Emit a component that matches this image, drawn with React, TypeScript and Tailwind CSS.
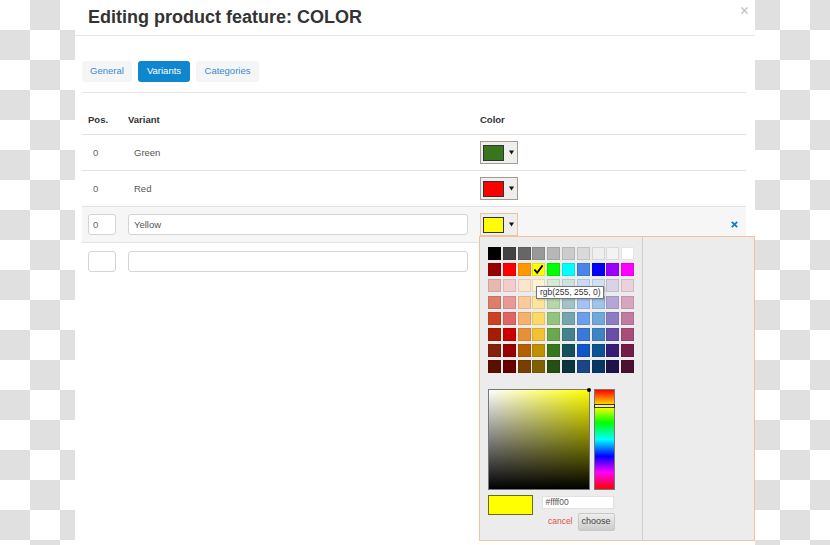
import React from "react";

const palette = [
  ["#000000", "#434343", "#666666", "#999999", "#b7b7b7", "#cccccc", "#d9d9d9", "#efefef", "#f3f3f3", "#ffffff"],
  ["#980000", "#ff0000", "#ff9900", "#ffff00", "#00ff00", "#00ffff", "#4a86e8", "#0000ff", "#9900ff", "#ff00ff"],
  ["#e6b8af", "#f4cccc", "#fce5cd", "#fff2cc", "#d9ead3", "#d0e0e3", "#c9daf8", "#cfe2f3", "#d9d2e9", "#ead1dc"],
  ["#dd7e6b", "#ea9999", "#f9cb9c", "#ffe599", "#b6d7a8", "#a2c4c9", "#a4c2f4", "#9fc5e8", "#b4a7d6", "#d5a6bd"],
  ["#cc4125", "#e06666", "#f6b26b", "#ffd966", "#93c47d", "#76a5af", "#6d9eeb", "#6fa8dc", "#8e7cc3", "#c27ba0"],
  ["#a61c00", "#cc0000", "#e69138", "#f1c232", "#6aa84f", "#45818e", "#3c78d8", "#3d85c6", "#674ea7", "#a64d79"],
  ["#85200c", "#990000", "#b45f06", "#bf9000", "#38761d", "#134f5c", "#1155cc", "#0b5394", "#351c75", "#741b47"],
  ["#5b0f00", "#660000", "#783f04", "#7f6000", "#274e13", "#0c343d", "#1c4587", "#073763", "#20124d", "#4c1130"],
];

const tabs = [
  { label: "General", width: "w-[50px]", active: false },
  { label: "Variants", width: "w-[52px]", active: true },
  { label: "Categories", width: "w-[63px]", active: false },
];

function ColorButton({ fill, active }: { fill: string; active?: boolean }) {
  return (
    <div
      className={`flex h-[23px] w-[38px] items-center border bg-[#eee] pl-[2px] ${
        active ? "border-[#f0c49b]" : "border-[#a89a8c]"
      }`}
    >
      <div className={`h-[16px] w-[21px] border border-[#333] ${fill}`} />
      <svg className="ml-[5px]" width="5" height="5" viewBox="0 0 5 5">
        <path d="M0 0.5h5L2.5 4.5z" fill="#111" />
      </svg>
    </div>
  );
}

function ColorPicker() {
  return (
    <div className="absolute left-[404px] top-[236px] flex h-[305px] w-[276px] border border-[#f0c49b] bg-[#ececec]">
      <div className="relative w-[163px] border-r border-[#cfcfcf] pl-[8px] pt-[10px]">
        <div className="grid grid-cols-[repeat(10,13px)] gap-x-[1.8px] gap-y-[3.2px]">
          {palette.flat().map((color, i) => (
            <div
              key={i}
              className="flex h-[13px] w-[13px] items-center justify-center border border-black/10"
              style={{ backgroundColor: color }}
            >
              {i === 13 && (
                <svg width="12" height="11" viewBox="0 0 12 11">
                  <path d="M1.5 5.5 L4.5 9 L10.5 1" fill="none" stroke="#000" strokeWidth="2" />
                </svg>
              )}
            </div>
          ))}
        </div>

        <div className="mt-[16px] flex gap-[4px]">
          <div className="relative h-[101px] w-[102px] border border-[#777] bg-[#ffff00]">
            <div className="absolute inset-0 bg-linear-to-r from-white to-transparent" />
            <div className="absolute inset-0 bg-linear-to-t from-black to-transparent" />
            <div className="absolute -right-[2px] -top-[2px] h-[4px] w-[4px] rounded-full bg-black" />
          </div>
          <div className="relative h-[101px] w-[21px] border border-[#777] bg-[linear-gradient(to_bottom,#f00_0%,#ff0_17%,#0f0_33%,#0ff_50%,#00f_67%,#f0f_83%,#f00_100%)]">
            <div className="absolute -left-[1px] -right-[1px] top-[14px] h-[4px] border border-[#333] bg-white/30" />
          </div>
        </div>

        <div className="mt-[5px] flex">
          <div className="h-[20px] w-[45px] border border-[#6b6b20] bg-[#ffff00]" />
          <div className="ml-[8.5px] flex w-[72px] flex-col">
            <div className="mt-[1px] h-[13px] border border-[#e2e2e2] bg-white pl-[3px] text-[8.5px] leading-[11px] text-[#555]">
              #ffff00
            </div>
            <div className="mt-[3.5px] flex items-center justify-end gap-[5px]">
              <span className="text-[8.5px] text-[#d9534f]">cancel</span>
              <button className="-mr-[1px] h-[18px] w-[37px] rounded-[2px] border border-[#c8c8c8] bg-linear-to-b from-[#eee] to-[#ccc] text-[9px] text-[#444]">
                choose
              </button>
            </div>
          </div>
        </div>

        <div className="absolute left-[56px] top-[49px] h-[13px] w-[68px] border border-[#767676] bg-white pl-[3px] text-[8.5px] leading-[11px] text-[#333] shadow-[1px_1px_2px_rgba(0,0,0,0.2)]">
          rgb(255, 255, 0)
        </div>
      </div>
      <div className="flex-1" />
    </div>
  );
}

export default function App() {
  return (
    <div className="h-[545px] w-[830px] overflow-hidden bg-[image:conic-gradient(#e0e0e0_25%,#fff_0_50%,#e0e0e0_0_75%,#fff_0)] bg-[length:60px_60px] pl-[75px] font-['Liberation_Sans',Arial,sans-serif]">
      <div className="relative h-[545px] w-[680px] bg-white">
        <div className="h-[36px] border-b border-[#e8e8e8] pl-[13px] pt-[6.5px] text-[18px] font-bold leading-[20px] text-[#333]">
          Editing product feature: COLOR
        </div>
        <button type="button" className="absolute right-[7px] top-[7px]">
          <svg width="7" height="7" viewBox="0 0 7 7">
            <path d="M0.5 0.5L6.5 6.5M6.5 0.5L0.5 6.5" stroke="#c4c4c4" strokeWidth="1.5" />
          </svg>
        </button>

        <div className="pl-[7px] pr-[9px]">
          <div className="flex gap-[6px] border-b border-[#e5e5e5] pb-[10px] pt-[25px]">
            {tabs.map((tab) => (
              <div
                key={tab.label}
                className={`flex h-[21px] items-center justify-center rounded-[3px] text-[9.5px] ${tab.width} ${
                  tab.active ? "bg-[#0e87cf] text-white" : "bg-[#f3f5f7] text-[#3d89cc]"
                }`}
              >
                {tab.label}
              </div>
            ))}
          </div>

          <div className="grid h-[42px] grid-cols-[40px_352px_1fr_30px] items-end border-b border-[#e3e3e3] pb-[8px] text-[9.5px] font-bold leading-[12px] text-[#333]">
            <div className="pl-[6px]">Pos.</div>
            <div className="pl-[6px]">Variant</div>
            <div className="pl-[6px]">Color</div>
            <div />
          </div>

          <div className="grid h-[36px] grid-cols-[40px_352px_1fr_30px] items-center border-b border-[#e3e3e3] text-[9.5px] leading-[12px]">
            <div className="pl-[11px] text-[#666]">0</div>
            <div className="pl-[12px] text-[#555]">Green</div>
            <div className="pl-[6px]">
              <ColorButton fill="bg-[#38761d]" />
            </div>
            <div />
          </div>

          <div className="grid h-[36px] grid-cols-[40px_352px_1fr_30px] items-center border-b border-[#e3e3e3] text-[9.5px] leading-[12px]">
            <div className="pl-[11px] text-[#666]">0</div>
            <div className="pl-[12px] text-[#555]">Red</div>
            <div className="pl-[6px]">
              <ColorButton fill="bg-[#ff0000]" />
            </div>
            <div />
          </div>

          <div className="grid h-[36px] grid-cols-[40px_352px_1fr_30px] items-center border-b border-[#e3e3e3] bg-[#f6f6f6] text-[9.5px] leading-[12px]">
            <div className="pl-[6px]">
              <div className="flex h-[21px] w-[28px] items-center rounded-[3px] border border-[#d4d4d4] bg-white pl-[4px] text-[#666]">
                0
              </div>
            </div>
            <div className="pl-[6px]">
              <div className="flex h-[21px] w-[340px] items-center rounded-[3px] border border-[#d4d4d4] bg-white pl-[5px] text-[#555]">
                Yellow
              </div>
            </div>
            <div className="pl-[6px]">
              <ColorButton fill="bg-[#ffff00]" active />
            </div>
            <div className="flex justify-end pr-[8px]">
              <svg width="7" height="7" viewBox="0 0 7 7">
                <path d="M0.8 0.8L6.2 6.2M6.2 0.8L0.8 6.2" stroke="#1a7bc2" strokeWidth="1.8" />
              </svg>
            </div>
          </div>

          <div className="grid h-[36px] grid-cols-[40px_352px_1fr_30px] items-center text-[9.5px] leading-[12px]">
            <div className="pl-[6px]">
              <div className="h-[21px] w-[28px] rounded-[3px] border border-[#d4d4d4] bg-white" />
            </div>
            <div className="pl-[6px]">
              <div className="h-[21px] w-[340px] rounded-[3px] border border-[#d4d4d4] bg-white" />
            </div>
            <div />
            <div />
          </div>
        </div>

        <ColorPicker />
      </div>
    </div>
  );
}
